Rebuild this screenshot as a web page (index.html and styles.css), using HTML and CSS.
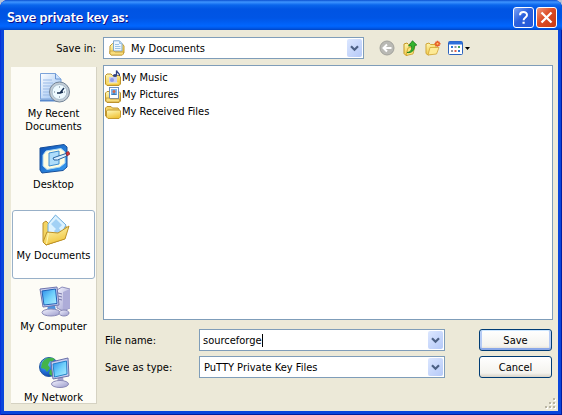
FILE: index.html
```html
<!DOCTYPE html>
<html lang="en">
<head>
<meta charset="utf-8">
<title>Save private key as:</title>
<link rel="stylesheet" href="styles.css">
</head>
<body>
<svg class="defs" aria-hidden="true">
  <defs>
    <linearGradient id="gold" x1="0" y1="0" x2="0.4" y2="1"><stop offset="0" stop-color="#fffbc0"/><stop offset="1" stop-color="#f0c53c"/></linearGradient>
    <linearGradient id="screen" x1="0" y1="0" x2="1" y2="1"><stop offset="0" stop-color="#2b8ae8"/><stop offset="0.5" stop-color="#6fd0fb"/><stop offset="1" stop-color="#b5f0ff"/></linearGradient>
    <linearGradient id="paper" x1="0" y1="0" x2="1" y2="1"><stop offset="0" stop-color="#ffffff"/><stop offset="1" stop-color="#8fbbf0"/></linearGradient>
    <linearGradient id="silver" x1="0" y1="0" x2="1" y2="1"><stop offset="0" stop-color="#f4f4ff"/><stop offset="1" stop-color="#9a9acb"/></linearGradient>
    <radialGradient id="globe" cx="0.35" cy="0.3" r="0.8"><stop offset="0" stop-color="#8fd8ff"/><stop offset="0.5" stop-color="#2476e0"/><stop offset="1" stop-color="#103a9c"/></radialGradient>
    <linearGradient id="blue" x1="0" y1="0" x2="1" y2="1"><stop offset="0" stop-color="#0d50b4"/><stop offset="1" stop-color="#3aa0f4"/></linearGradient>
    <symbol id="chevron" viewBox="0 0 9 7"><path d="M1 1.2L4.5 4.7L8 1.2" fill="none" stroke="#4d6185" stroke-width="2.2"/></symbol>
  </defs>
</svg>
<main class="window">
  <header class="titlebar">
    <h1>Save private key as:</h1>
    <button class="caption help" type="button" aria-label="Help"><svg viewBox="0 0 19 19"><path d="M6 7.2C6 3 13 3 13 7C13 9.5 9.6 9.4 9.6 12.2" fill="none" stroke="#fff" stroke-width="2"/><path d="M8.5 13.8h2.2v2H8.5z" fill="#fff"/></svg></button>
    <button class="caption close" type="button" aria-label="Close"><svg viewBox="0 0 19 19"><path d="M4.5 4.5L14.500 14.500M14.500 4.500L4.500 14.500" stroke="#fff" stroke-width="2.300"/></svg></button>
  </header>
  <form class="content">
    <div class="lookin">
      <label for="folder">Save in:</label>
      <div class="combo with-icon">
        <svg class="icon16" viewBox="0 0 16 16"><path d="M1 6L3.500 3.500H13L15 6V13L13 15H2L.8 13.500Z" fill="url(#gold)" stroke="#c39a35"/><path d="M4.500 .8h6L13 3.500V11h-8.500Z" fill="#eef7ff" stroke="#7fa9d0"/><path d="M10.500 1v2.500H13M6 4.500h4M6 6.500h5.500M6 8.500h5.500" fill="none" stroke="#9cc3e4"/><path d="M1 11h4l1 1h8.500v2L13.500 15H2L1 14Z" fill="#f8dd7c" stroke="#bf9634" stroke-width=".7"/></svg>
        <select id="folder"><option>My Documents</option></select>
        <span class="drop"><svg><use href="#chevron"/></svg></span>
      </div>
      <div class="tools">
        <button type="button" aria-label="Back"><svg class="icon16" viewBox="0 0 16 16"><circle cx="8" cy="8" r="7" fill="#b9b9b4" stroke="#a2a29c"/><path d="M12.500 8H5M8 4.500L4.500 8L8 11.500" fill="none" stroke="#fff" stroke-width="2"/></svg></button>
        <button type="button" aria-label="Up one level"><svg class="icon16" viewBox="0 0 16 16"><path d="M2 4l3-1 1.500 1.500L11 3v10l-7 2.500L2 13.500Z" fill="url(#gold)" stroke="#c39724"/><path d="M4 15.500L6 8l7-2-2 8Z" fill="#fce77d" stroke="#c39724" stroke-width=".7"/><path d="M5 12.500c4-.5 5-3 4.500-6.500H6.500L10.500 .8L14.800 5L12.300 5.700C13 9.500 10 13.500 5 12.500Z" fill="#35b52e" stroke="#187a1c" stroke-width=".8"/></svg></button>
        <button type="button" aria-label="Create new folder"><svg class="icon16" viewBox="0 0 16 16"><path d="M1 4l3-1 1.500 1.500L11 4.500v8L3 15L1 13.500Z" fill="url(#gold)" stroke="#d1a535"/><path d="M3 15L5 7.500h9L11.500 14Z" fill="#fdea96" stroke="#d1a535" stroke-width=".8"/><path d="M12.500 .8v6M9.500 3.800h6M10.500 1.800l4 4M14.500 1.800l-4 4" stroke="#e75b28" stroke-width="1.500"/><circle cx="12.500" cy="3.800" r="1" fill="#ffca64"/></svg></button>
        <button type="button" aria-label="View menu" class="views"><svg viewBox="0 0 24 16"><rect x=".5" y="1.500" width="14" height="13" rx="1" fill="#fff" stroke="#2c63bd"/><path d="M1 3h13" stroke="#2d70db" stroke-width="3"/><path d="M3 7h2M10 11h2" stroke="#2d78d5" stroke-width="2"/><path d="M6.500 7h2M3 11h2" stroke="#94989f" stroke-width="2"/><path d="M10 7h2" stroke="#43a85a" stroke-width="2"/><path d="M6.500 11h2" stroke="#df604a" stroke-width="2"/><path d="M17 7h5l-2.500 3Z" fill="#000"/></svg></button>
      </div>
    </div>
    <div class="main">
      <nav class="places" aria-label="Places">
        <button type="button"><svg viewBox="0 0 32 32"><path d="M2.500 1.500h15L23 7v20H2.500Z" fill="url(#paper)" stroke="#7ba3da"/><path d="M17.500 1.500V7H23" fill="#cce2fd" stroke="#6b96d2"/><path d="M5 8h9M5 11h10M5 14h8M5 17h7M5 20h7M5 23h8" stroke="#9bbbe7"/><path d="M2 28.500h17" stroke="#5889cd" stroke-width="2"/><circle cx="21.500" cy="20" r="10" fill="#c3cdd6" stroke="#728497"/><circle cx="21.500" cy="20" r="7.500" fill="#eefaff" stroke="#a8bdcc"/><path d="M21.500 14.500v1M21.500 25.500v-1M16 20h1M27 20h-1" stroke="#678"/><path d="M19 21h3L26 16M22 21L25 20" fill="none" stroke="#182f50" stroke-width="1.400"/></svg><span>My Recent Documents</span></button>
        <button type="button"><svg viewBox="0 0 32 32"><path d="M2 5L26 1.500L29 4V24L25 27.500L4 30L2 27Z" fill="url(#blue)" stroke="#164e99"/><path d="M8 8L23 5.500L27 9V20L22 24L9 26.500L5 23V12Z" fill="#fffde0" stroke="#a4d6f5"/><path d="M11 10L21 8V21L11 23Z" fill="#aeddfb" stroke="#3f8dcf"/><path d="M15 15L19 13.500L28 10.500L29 13L19.500 17L16 17Z" fill="#d9eeff" stroke="#28649f"/><path d="M28 9.500l2.500-1L32 11l-3 2Z" fill="#d83535" stroke="#7f2432" stroke-width=".7"/></svg><span>Desktop</span></button>
        <button type="button" class="selected"><svg viewBox="0 0 32 32"><path d="M5 9L8 7L12 11L29 13L26 25L8 31L5 27Z" fill="#f3d462" stroke="#b98e2c"/><path d="M10 10L17.500 1L28 11L20 26L10 23Z" fill="#dcf2ff" stroke="#6aabdc"/><path d="M13 10l5-5 6 6-5 5ZM16 17l4-4 3 4-4 4Z" fill="#a2d1f5"/><path d="M5 28L9 18L20 19L31 12L27 25L8 31Z" fill="url(#gold)" stroke="#bc9127"/><path d="M8.500 30L10.500 19" stroke="#fff8b4"/></svg><span>My Documents</span></button>
        <button type="button"><svg viewBox="0 0 32 32"><path d="M19 5L24 2L32 4V23L25 26L19 23Z" fill="url(#silver)" stroke="#8d8dbb"/><path d="M25 7L32 4V23L25 26Z" fill="#adacd8"/><path d="M20 8l4 1M20 11l4 1M20 14l4 1" stroke="#7876ab"/><path d="M10 20h7l1 6H9Z" fill="#4c93df"/><ellipse cx="13" cy="27.500" rx="9" ry="3.500" fill="url(#silver)" stroke="#8888b5"/><ellipse cx="26" cy="28" rx="5" ry="3" fill="url(#silver)" stroke="#8888b5"/><path d="M2 4L19 2L21 20L5 22Z" fill="#c8cdf0" stroke="#7075ad"/><path d="M4 6L17.500 4L19 18.500L6 20Z" fill="url(#screen)" stroke="#2161b8"/></svg><span>My Computer</span></button>
        <button type="button"><svg viewBox="0 0 32 32"><circle cx="11" cy="11" r="9.500" fill="url(#globe)" stroke="#235aa4"/><path d="M4 7C7 1 13 1 17 3L14 6L12 5L10 9L12 12L9 16L7 13L3 12ZM12 14L17 12L18 17L14 20L11 18Z" fill="#43b44a"/><path d="M20 21h5l1 6h-7Z" fill="#a2a1cb"/><ellipse cx="22" cy="28" rx="8.500" ry="3.500" fill="url(#silver)" stroke="#8888b5"/><path d="M13 6L30 2L31 20L15 23Z" fill="#c8cdf0" stroke="#6a70a8"/><path d="M15 8L28.500 5L29 18L16.500 21Z" fill="url(#screen)" stroke="#2482c8"/></svg><span>My Network</span></button>
      </nav>
      <div class="right">
        <ul class="files">
          <li><svg class="icon16" viewBox="0 0 16 16"><path d="M.5 5.500L2 4h4l1.500 1.500H14L15.500 7v7L14 15.500H2L.5 14Z" fill="url(#gold)" stroke="#bd932c"/><path d="M4 7h8v6H4Z" fill="#c9cdf3"/><path d="M2.500 13h11" stroke="#fff0a0"/><path d="M11.500 5V.5C12 3 15 3 14.500 6" fill="none" stroke="#304080" stroke-width="1.300"/><ellipse cx="10" cy="5.500" rx="2.100" ry="1.500" fill="#304080"/><circle cx="7" cy="10" r="2" fill="#8f9be8"/></svg>My Music</li>
          <li><svg class="icon16" viewBox="0 0 16 16"><path d="M.5 6L2 4.500h12l1.500 1.500v8L14 15.500H2L.5 14Z" fill="url(#gold)" stroke="#bd932c"/><rect x="4.500" y=".5" width="9" height="11" fill="#fff" stroke="#6f8fbb"/><path d="M6 2h6v6H6Z" fill="#78b5ef"/><circle cx="9" cy="4.500" r="1.500" fill="#cf664c"/><path d="M6 8l3-2 3 2Z" fill="#3e7bb0"/><path d="M1 11h3l1.500 1h9v2l-1 1H2l-1-1Z" fill="#f8dd7c" stroke="#bd9330" stroke-width=".7"/></svg>My Pictures</li>
          <li><svg class="icon16" viewBox="0 0 16 16"><path d="M.5 4L2 2.500h4L7.500 4H13l1 1.500V13H2L.5 12Z" fill="#f5d56a" stroke="#bd9330"/><path d="M2.500 6h12l1 1v6L14 14.500H3L1.500 13V7Z" fill="url(#gold)" stroke="#c4992d"/></svg>My Received Files</li>
        </ul>
        <div class="fields">
          <label for="name">File name:</label>
          <div class="combo editable"><input id="name" type="text" value="sourceforge"><span class="caret"></span><span class="drop"><svg><use href="#chevron"/></svg></span></div>
          <button type="submit" class="push default">Save</button>
          <label for="type">Save as type:</label>
          <div class="combo"><select id="type"><option>PuTTY Private Key Files</option></select><span class="drop"><svg><use href="#chevron"/></svg></span></div>
          <button type="button" class="push">Cancel</button>
        </div>
      </div>
    </div>
  </form>
  <svg class="grip" viewBox="0 0 12 12"><path d="M9 1h2v2H9zM5 5h2v2H5zM9 5h2v2H9zM1 9h2v2H1zM5 9h2v2H5zM9 9h2v2H9z" fill="#fff"/><path d="M8 0h2v2H8zM4 4h2v2H4zM8 4h2v2H8zM0 8h2v2H0zM4 8h2v2H4zM8 8h2v2H8z" fill="#b8b4a2"/></svg>
</main>
</body>
</html>
```
FILE: styles.css
```css
* { box-sizing: border-box; }
body {
  margin: 0;
  background: #b9c4d8;
  font: 11px/13px "DejaVu Sans Condensed", "DejaVu Sans", sans-serif;
  color: #000;
}
button, input, select { font: inherit; color: inherit; padding: 0; margin: 0; }
svg { display: block; }
.defs { position: absolute; width: 0; height: 0; }
.window {
  position: relative;
  display: flex;
  flex-direction: column;
  height: 100vh;
  padding: 0 4px 4px;
  overflow: hidden;
  border-radius: 8px 8px 0 0;
  background: #0a46dc;
  box-shadow: inset 1px 0 #0831d9, inset -1px -1px #001ea0;
}
.titlebar {
  display: flex;
  flex: none;
  align-items: center;
  gap: 2px;
  height: 30px;
  margin: 0 -4px;
  padding: 4px 5px 0 7px;
  background: linear-gradient(#0a4fd0 0, #3e94ff 2px, #0a66ec 5px, #0054e3 9px, #0055e5 18px, #0066ff 26px, #0059ea 28px, #0045c4 30px);
}
h1 {
  flex: 1;
  margin: 0;
  font: bold 14px/16px Lato, "Noto Sans", sans-serif;
  color: #fff;
  text-shadow: 1px 1px #0f1089;
}
.caption {
  width: 21px;
  height: 21px;
  border: 1px solid #fff;
  border-radius: 3px;
}
.help { background: linear-gradient(135deg, #7da3f5, #2b60dd 45%, #2458d8); }
.close { background: linear-gradient(135deg, #f0967c, #dc4c25 45%, #c83a12); }
.content {
  display: flex;
  flex: 1;
  flex-direction: column;
  gap: 6px;
  min-height: 0;
  padding: 7px 5px 7px 7px;
  background: #ece9d8;
}
.lookin {
  display: grid;
  grid-template-columns: 85px minmax(0, 261px) auto;
  align-items: center;
  justify-content: start;
  column-gap: 7px;
}
.lookin label { text-align: right; }
.tools { display: flex; gap: 7px; padding-left: 8px; }
.tools button { background: none; border: 0; }
.icon16 { width: 16px; height: 16px; }
.views svg { width: 24px; height: 16px; }
.combo {
  position: relative;
  display: flex;
  align-items: center;
  height: 22px;
  padding: 1px;
  border: 1px solid #7f9db9;
  background: #fff;
}
.combo select {
  flex: 1;
  min-width: 0;
  height: 18px;
  padding: 0 18px 0 3px;
  border: 0;
  outline: 0;
  appearance: none;
  background: none;
}
.with-icon { padding-left: 5px; }
.with-icon select { padding-left: 6px; }
.editable input { field-sizing: content; padding-left: 2px; border: 0; outline: 0; background: none; }
.caret { width: 1px; height: 13px; background: #000; }
.drop {
  position: absolute;
  top: 1px;
  right: 1px;
  bottom: 1px;
  display: grid;
  place-items: center;
  width: 15px;
  border-radius: 2px;
  background: linear-gradient(135deg, #dce7ff, #b5c9f8);
  pointer-events: none;
}
.drop svg { width: 9px; height: 7px; }
.main {
  display: grid;
  flex: 1;
  grid-template-columns: 86px minmax(0, 1fr);
  grid-template-rows: minmax(0, 1fr);
  gap: 6px;
  min-height: 0;
}
.places {
  display: flex;
  flex-direction: column;
  gap: 2px;
  margin-top: 2px;
  padding: 1px 1px 0;
  overflow: hidden;
  border-right: 1px solid #d5d2c2;
  border-bottom: 1px solid #d5d2c2;
  background: #fdfcf6;
}
.places button {
  display: flex;
  flex: none;
  flex-direction: column;
  align-items: center;
  gap: 3px;
  height: 69px;
  padding: 3px 0 0;
  border: 1px solid transparent;
  border-radius: 3px;
  background: none;
}
.places button span { max-width: 74px; }
.places button svg { width: 32px; height: 32px; }
.places .selected { border-color: #98b0c8; background: #fff; }
.right { display: flex; flex-direction: column; gap: 9px; min-height: 0; padding-bottom: 26px; }
.files {
  flex: 1;
  min-height: 0;
  margin: 0;
  padding: 3px 1px;
  list-style: none;
  border: 1px solid #7f9db9;
  background: #fff;
}
.files li { display: flex; align-items: center; gap: 1px; height: 17px; }
.fields {
  display: grid;
  grid-template-columns: 96px minmax(0, 1fr) 73px;
  align-items: center;
  row-gap: 5px;
  padding-right: 1px;
}
.fields label { padding-left: 2px; }
.fields .combo { margin-right: 34px; }
.push {
  height: 22px;
  border: 1px solid #003c74;
  border-radius: 3px;
  background: linear-gradient(#fff, #f4f3ee 80%, #d8d2c6);
}
.default { box-shadow: inset 0 1px #cee7ff, inset 0 -2px #89a7e8, inset 2px 0 #b5cbf5, inset -2px 0 #b5cbf5; }
.grip { position: absolute; right: 5px; bottom: 5px; width: 12px; height: 12px; }
```
